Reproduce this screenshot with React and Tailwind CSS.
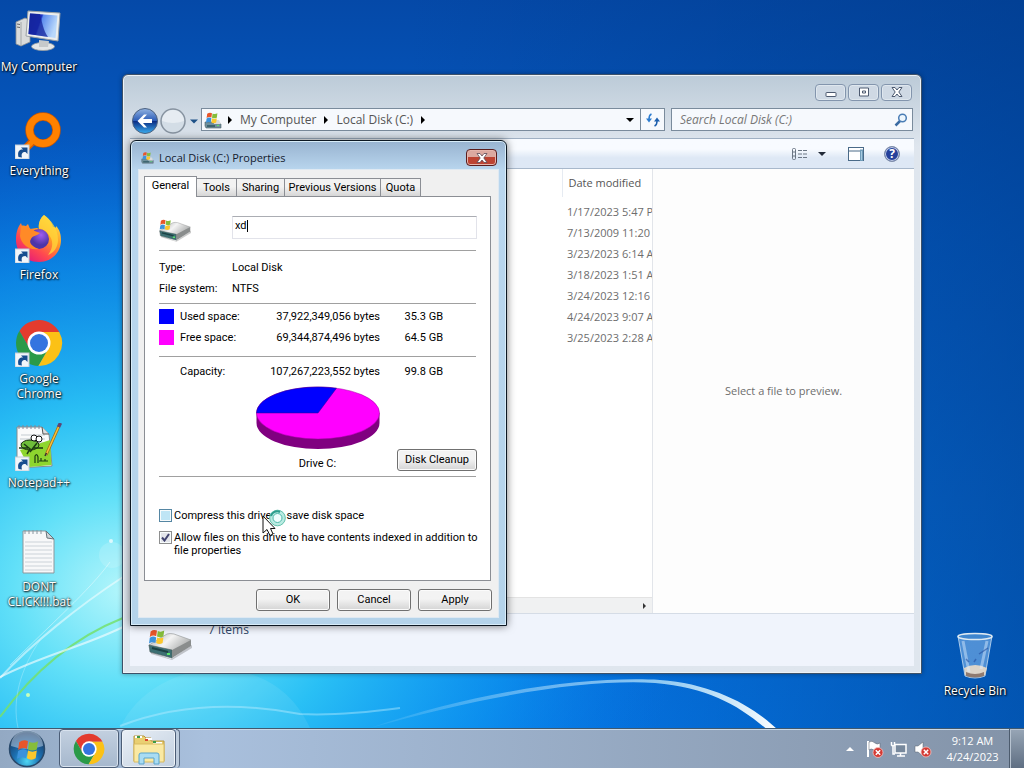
import React, { useState } from 'react';

const uiFont = "font-['Open_Sans','Noto_Sans',sans-serif]";
const dialogFont = "font-['Roboto','Liberation_Sans',sans-serif]";

const files = [
  '1/17/2023 5:47 PM',
  '7/13/2009 11:20 PM',
  '3/23/2023 6:14 AM',
  '3/18/2023 1:51 AM',
  '3/24/2023 12:16 PM',
  '4/24/2023 9:07 AM',
  '3/25/2023 2:28 AM',
];

const Wallpaper = () => (
  <svg className="absolute inset-0 h-full w-full" viewBox="0 0 1024 768" preserveAspectRatio="none" aria-hidden="true">
    <defs>
      <linearGradient id="sky" x1="0" y1="0" x2="0" y2="1">
        <stop offset="0" stopColor="#0549a8" />
        <stop offset="0.3" stopColor="#0560cb" />
        <stop offset="0.65" stopColor="#0874e2" />
        <stop offset="1" stopColor="#0580f5" />
      </linearGradient>
      <linearGradient id="night" x1="0" y1="0" x2="1" y2="0">
        <stop offset="0.4" stopColor="#003a88" stopOpacity="0" />
        <stop offset="0.9" stopColor="#003a88" stopOpacity="0.5" />
        <stop offset="1" stopColor="#003a88" stopOpacity="0.6" />
      </linearGradient>
      <radialGradient id="glow" gradientUnits="userSpaceOnUse" cx="0" cy="0" r="1" gradientTransform="translate(125 590) scale(560 460)">
        <stop offset="0" stopColor="#b4f6fb" />
        <stop offset="0.2" stopColor="#62e0f8" />
        <stop offset="0.4" stopColor="#2bc3f5" stopOpacity="0.95" />
        <stop offset="0.7" stopColor="#109cf0" stopOpacity="0.6" />
        <stop offset="1" stopColor="#0874e2" stopOpacity="0" />
      </radialGradient>
      <linearGradient id="swoosh" x1="0" y1="0" x2="1" y2="0">
        <stop offset="0" stopColor="#fff" stopOpacity="0.05" />
        <stop offset="0.7" stopColor="#c8f0ff" stopOpacity="0.7" />
        <stop offset="1" stopColor="#fff" />
      </linearGradient>
    </defs>
    <rect width="1024" height="768" fill="url(#sky)" />
    <rect width="1024" height="768" fill="url(#night)" />
    <rect width="1024" height="768" fill="url(#glow)" />
    <path d="M370 728C480 690 590 676 660 680C715 684 755 707 780 732L770 732C740 706 710 688 655 683C590 679 490 694 370 728Z" fill="url(#swoosh)" />
    <path d="M120 726Q200 695 300 714Q340 716 400 708" fill="none" stroke="#b5ecff" strokeOpacity="0.45" strokeWidth="2" />
    <path d="M120 728C150 660 270 640 310 728Z" fill="#fff" fillOpacity="0.08" />
    <path d="M0 717C33 672 75 637 123 618" fill="none" stroke="#74e06d" strokeWidth="2" strokeOpacity="0.85" />
    <path d="M0 677C45 654 80 648 123 627" fill="none" stroke="#fff" strokeWidth="2" strokeOpacity="0.6" />
    <path d="M0 678C30 645 80 605 123 577" fill="none" stroke="#fff" strokeWidth="2" strokeOpacity="0.5" />
    <path d="M10 665C50 625 90 590 110 562" fill="none" stroke="#fff" strokeWidth="1" strokeOpacity="0.4" />
    <path d="M18 728C12 700 20 670 40 640" fill="none" stroke="#fff" strokeWidth="1" strokeOpacity="0.25" />
    <circle cx="28" cy="695" r="2" fill="#c8ffb8" />
    <circle cx="111" cy="541" r="2" fill="#fff" fillOpacity="0.7" />
    <circle cx="112" cy="555" r="13" fill="#fff" fillOpacity="0.15" />
  </svg>
);

const ShortcutArrow = () => (
  <g>
    <rect x="0" y="34" width="14" height="14" fill="#f2f6fa" stroke="#c3ccd6" strokeWidth="1" />
    <path d="M3.500 46C2 40 5 38 8 38.500L6 36.500H12.500V43L10.500 41C7 41 6 43 7 46.500Z" fill="#174d8f" />
  </g>
);

const FlagShapes = () => (
  <g>
    <path d="M2 3Q6 0 10 2L9 9Q5 7 1 10Z" fill="#e8562a" />
    <path d="M11 2.500Q15 4.500 19 2L18 9.500Q14 11.500 10 9.500Z" fill="#86bd3a" />
    <path d="M1 11Q5 8 9 10.500L8 17.500Q4 15.500 0 18Z" fill="#3c92dc" />
    <path d="M10 10.500Q14 12.500 18 10.500L17 17.500Q13 20 9 17.500Z" fill="#fcc72c" />
  </g>
);

const MyComputerIcon = () => (
  <svg className="h-12 w-12" viewBox="0 0 48 48" aria-hidden="true">
    <defs>
      <linearGradient id="screen" x1="0" y1="0" x2="1" y2="0.300">
        <stop offset="0" stopColor="#1428a0" />
        <stop offset="0.450" stopColor="#1c33c4" />
        <stop offset="0.500" stopColor="#5b8bee" />
        <stop offset="1" stopColor="#b9d8fb" />
      </linearGradient>
    </defs>
    <path d="M1 15L10 11L15 13V35L6 39L1 37Z" fill="#d9dbdb" stroke="#8d9192" strokeWidth="0.800" />
    <path d="M6 15V39" stroke="#a4a8a9" />
    <path d="M2 17L5 17.500M2 20L5 20.500" stroke="#666" />
    <ellipse cx="28" cy="39.500" rx="11.500" ry="4" fill="#e4e6e6" stroke="#9b9e9f" strokeWidth="0.800" />
    <path d="M24 33L34 34L33 40H24Z" fill="#c6c9ca" />
    <path d="M13 4L45 6L43 34L11 29Z" fill="#eceeee" stroke="#9ba1a5" />
    <path d="M15 6.500L42.500 8.500L40.500 31L13.500 27Z" fill="url(#screen)" />
    <path d="M15 6.500L25 7C27 14 28 23 33 30L13.500 27Z" fill="#14239b" fillOpacity="0.750" />
  </svg>
);

const EverythingIcon = () => (
  <svg className="h-12 w-12" viewBox="0 0 48 48" aria-hidden="true">
    <path d="M18 30L11 37" stroke="#d95c02" strokeWidth="8" />
    <circle cx="28" cy="19" r="13.500" fill="none" stroke="#c95600" strokeWidth="8.500" />
    <circle cx="28" cy="19" r="13.500" fill="none" stroke="#ff8100" strokeWidth="7" />
    <path d="M18 30L12 36" stroke="#ff8100" strokeWidth="5" />
    <ShortcutArrow />
  </svg>
);

const FirefoxIcon = () => (
  <svg className="h-12 w-12" viewBox="0 0 48 48" aria-hidden="true">
    <defs>
      <linearGradient id="fox" x1="0.900" y1="0" x2="0.200" y2="1">
        <stop offset="0" stopColor="#fff14f" />
        <stop offset="0.400" stopColor="#ff9b26" />
        <stop offset="0.700" stopColor="#ff4850" />
        <stop offset="1" stopColor="#e1157f" />
      </linearGradient>
      <radialGradient id="globe" cx="0.600" cy="0.300">
        <stop offset="0" stopColor="#a05df0" />
        <stop offset="1" stopColor="#4c35a8" />
      </radialGradient>
    </defs>
    <path d="M29 0C36 5 37 9 38 12C40 12 41 14 41 11C45 15 46 20 46 25C46 38 36 47 24 47C10 47 1 37 1 25C1 19 2 13 6 8L8 14L13 9L15 14C18 14 22 12 24 14C23 9 25 3 29 0Z" fill="url(#fox)" />
    <path d="M29 0C36 6 43 12 43 25C43 32 39 38 33 40C39 32 38 25 34 20C31 15 25 13 24 14C23 9 25 3 29 0Z" fill="#ffd83b" fillOpacity="0.750" />
    <circle cx="24" cy="24" r="10" fill="url(#globe)" />
    <path d="M6 11C12 9 14 15 25 18C22 21 18 20 16 24C13 28 18 32 24 34C14 36 6 29 5 21Z" fill="#ff8a27" />
    <ShortcutArrow />
  </svg>
);

const ChromeShapes = () => (
  <g>
    <path d="M44.200 13A23 23 0 0 0 4.400 12L14.500 29.500L24 13Z" fill="#e33b2e" />
    <path d="M4.400 12A23 23 0 0 0 23.400 47L33.500 29.500H14.500Z" fill="#2a9a48" />
    <path d="M23.400 47A23 23 0 0 0 44.200 13H24L33.500 29.500Z" fill="#fbc116" />
    <circle cx="24" cy="24" r="11.500" fill="#fff" />
    <circle cx="24" cy="24" r="9" fill="#3474e0" />
  </g>
);

const ChromeShortcutIcon = () => (
  <svg className="h-12 w-12" viewBox="0 0 48 48" aria-hidden="true">
    <ChromeShapes />
    <ShortcutArrow />
  </svg>
);

const NotepadIcon = () => (
  <svg className="h-12 w-12" viewBox="0 0 48 48" aria-hidden="true">
    <path d="M2 4H27L34 11L37 43L2 45Z" fill="#fafafa" stroke="#858b8d" />
    <path d="M6 12H30M5 16H30M5 20H33" stroke="#c4cbd0" />
    <path d="M5 27L35 17L36.500 42L14 44Z" fill="#8ed62e" />
    <path d="M4 2V6M8 2V6M12 2V6M16 2V6M20 2V6M24 2V6" stroke="#889" />
    <ellipse cx="15" cy="22" rx="9" ry="5" fill="#6fbe3a" stroke="#162b0c" />
    <path d="M4 25H13M18 25H28M9 21L15 26L12 31M22 20L15 29" stroke="#1d3c12" fill="none" strokeWidth="1.500" />
    <circle cx="19" cy="15" r="3" fill="#fff" stroke="#111" />
    <circle cx="24" cy="16" r="3" fill="#fff" stroke="#111" />
    <path d="M20 40V33Q22 30 23 34V40M26 38V35M30 38V36M24 38H33" stroke="#1d3c12" fill="none" strokeWidth="1.200" />
    <path d="M27 4L28 11L34 11" fill="#ddd" stroke="#555" />
    <path d="M44 3L31 32" stroke="#a36b12" strokeWidth="3" />
    <path d="M44 3L31 32" stroke="#f5c23b" strokeWidth="1.500" />
    <path d="M45.500 0L43.500 4" stroke="#5c4676" strokeWidth="3.500" />
    <path d="M30 33L31.500 30" stroke="#333" strokeWidth="1.500" />
    <ShortcutArrow />
  </svg>
);

const BatIcon = () => (
  <svg className="h-12 w-12" viewBox="0 0 48 48" aria-hidden="true">
    <path d="M8 4H31L39 12V46H8Z" fill="#f7f8f9" stroke="#8b979c" />
    <path d="M10 15H37M10 19H37M10 23H37M10 27H37M10 31H37M10 35H37M10 39H37M10 43H37" stroke="#cbd2d8" />
    <path d="M31 4L32 11L39 12Z" fill="#cfd6da" stroke="#67747b" />
    <path d="M10 3V7M14 3V7M18 3V7M22 3V7M26 3V7" stroke="#8996a0" />
  </svg>
);

const RecycleBinIcon = () => (
  <svg className="h-12 w-12" viewBox="0 0 48 48" aria-hidden="true">
    <path d="M7 5L14 45Q24 49 34 45L41 5Z" fill="#9ac8f5" fillOpacity="0.500" stroke="#c8def2" strokeOpacity="0.800" />
    <path d="M13 37Q24 31 36 37L34 44Q24 48 14 44Z" fill="#dcd4c9" />
    <path d="M15 41Q24 45 33 41L33 45Q24 48 15 45Z" fill="#8f7a70" />
    <path d="M12 10L18 41M36 10L30 38" stroke="#dff0ff" strokeOpacity="0.450" strokeWidth="3" />
    <path d="M28 23L37 17M18 31L15 28M23 31L25 28" stroke="#254d9e" strokeOpacity="0.600" strokeWidth="1.500" />
    <ellipse cx="24" cy="5.500" rx="17" ry="3" fill="#3f86cf" stroke="#dfeaf2" strokeWidth="1.500" />
  </svg>
);

const DriveIcon = ({ className }) => (
  <svg className={className} viewBox="0 0 44 32" aria-hidden="true">
    <defs>
      <linearGradient id="drive" x1="0" y1="0" x2="1" y2="0.500">
        <stop offset="0" stopColor="#a0a3a3" />
        <stop offset="0.500" stopColor="#f4f4f4" />
        <stop offset="1" stopColor="#a9abab" />
      </linearGradient>
    </defs>
    <path d="M3 24L23 31L44 17V20L24 32L3 26Z" fill="#000" fillOpacity="0.200" />
    <path d="M1 17L19 6Q22 5 26 6L43 12L24 25L2 20Z" fill="url(#drive)" stroke="#8f9292" strokeWidth="0.600" />
    <path d="M1 17L24 22V30L2 24Z" fill="#3c6f72" stroke="#4c5a5a" strokeWidth="0.600" />
    <path d="M24 22L43 12V18L24 30Z" fill="#8a8d8d" />
    <path d="M4 20L20 24" stroke="#1c4144" strokeWidth="2" />
    <rect x="19" y="25" width="3" height="2" fill="#59e36a" />
    <g transform="translate(1 1) scale(0.800)"><FlagShapes /></g>
  </svg>
);

/* Compact version for the 16px slots, where the flag takes up most of the icon */
const SmallDriveIcon = ({ className }) => (
  <svg className={className} viewBox="0 0 18 18" aria-hidden="true">
    <path d="M1 11H14L17 13V17H2L1 15Z" fill="#6f8f9b" stroke="#4f6068" strokeWidth="0.600" />
    <path d="M10 9L15 9L17 13H10Z" fill="#d9dcdc" />
    <path d="M3 15H11" stroke="#2b5560" strokeWidth="1.500" />
    <rect x="13" y="14" width="2" height="1" fill="#59e36a" />
    <g transform="translate(2 1) scale(0.600)"><FlagShapes /></g>
  </svg>
);

const BackIcon = () => (
  <svg className="h-7 w-7" viewBox="0 0 28 28" aria-hidden="true">
    <defs>
      <linearGradient id="back" x1="0" y1="0" x2="0" y2="1">
        <stop offset="0" stopColor="#93b4e2" />
        <stop offset="0.480" stopColor="#2c5db8" />
        <stop offset="0.520" stopColor="#0b2f86" />
        <stop offset="1" stopColor="#3cb0f2" />
      </linearGradient>
    </defs>
    <circle cx="14" cy="14" r="12.500" fill="url(#back)" stroke="#4c617f" />
    <path d="M6.500 14L13 7.500H16L12 12H21V16H12L16 20.500H13Z" fill="#fff" />
  </svg>
);

const ForwardIcon = () => (
  <svg className="h-7 w-7" viewBox="0 0 28 28" aria-hidden="true">
    <circle cx="14" cy="14" r="12" fill="#d3dde6" stroke="#8793a0" strokeWidth="1.500" />
    <path d="M3 14A11 11 0 0 1 25 14Q14 18 3 14Z" fill="#eef2f6" fillOpacity="0.700" />
  </svg>
);

const Triangle = ({ className, d = 'M0 0L4 4L0 8Z', box = '0 0 4 8' }) => (
  <svg className={className} viewBox={box} fill="currentColor" aria-hidden="true"><path d={d} /></svg>
);

const DownTriangle = ({ className }) => <Triangle className={className} d="M0 0H8L4 4Z" box="0 0 8 4" />;

const BusyCursor = () => (
  <svg className="pointer-events-none absolute left-[262px] top-[508px] h-8 w-7" viewBox="0 0 28 32" aria-hidden="true">
    <circle cx="15.500" cy="10" r="6" fill="none" stroke="#b9ebe2" strokeWidth="4" />
    <circle cx="15.500" cy="10" r="7.800" fill="none" stroke="#68c3ae" />
    <circle cx="15.500" cy="10" r="4.500" fill="#eefcfc" stroke="#50b9aa" />
    <path d="M9 8A6.500 6.500 0 0 1 18 4" fill="none" stroke="#2b9c8c" strokeWidth="2" />
    <path d="M1 8V25L5 21.500L8 27.500L11 26L8.500 20.500H13Z" fill="#fff" stroke="#111" />
  </svg>
);

const DesktopItem = ({ icon, label }) => (
  <button className="flex h-[67px] w-[78px] flex-col items-center gap-1 text-center text-xs leading-[15px] text-white [text-shadow:1px_1px_2px_#000,0_0_2px_#000]">
    <span className="block shrink-0">{icon}</span>
    <span className="whitespace-pre">{label}</span>
  </button>
);

const CaptionButton = ({ label, children }) => (
  <button aria-label={label} className="flex h-[17px] w-[31px] items-center justify-center rounded-sm border border-[#8395ad] bg-[#cfd9e4] shadow-[inset_0_0_0_1px_#dfe7ee]">
    <svg className="h-3 w-4" viewBox="0 0 16 12" fill="#fff" stroke="#4d5a70" aria-hidden="true">{children}</svg>
  </button>
);

const ExplorerWindow = () => (
  <section aria-label="Local Disk (C:)" className="absolute bottom-[54px] left-[122px] right-[102px] top-[74px] flex flex-col rounded-t-md border border-[#3d5168] bg-[#d9e3ec] bg-gradient-to-b from-[#bccbd8] to-[#dfe6ee] to-12% px-[7px] pb-[7px] text-[#555] shadow-[inset_0_0_0_1px_#edf2f6,0_0_5px_#0005]">
    <div className="flex h-[32px] shrink-0 items-center justify-end gap-0.5 pr-0.5 pt-0.5">
      <CaptionButton label="Minimize"><rect x="3" y="6.500" width="10" height="4" rx="0.500" /></CaptionButton>
      <CaptionButton label="Maximize"><path d="M3.500 2H12.500V10H3.500Z" /><path d="M6.500 5H9.500V7H6.500Z" /></CaptionButton>
      <CaptionButton label="Close"><path d="M3 1.500H6L8 4L10 1.500H13L9.800 6L13 10.500H10L8 8L6 10.500H3L6.200 6Z" /></CaptionButton>
    </div>
    <div className="flex h-[31px] shrink-0 items-start pl-px">
      <button aria-label="Back"><BackIcon /></button>
      <button aria-label="Forward"><ForwardIcon /></button>
      <button aria-label="Recent pages" className="flex h-6 w-3.5 items-center justify-center pt-1"><DownTriangle className="h-[5px] w-2 text-[#1d5187]" /></button>
      <div className="mt-px flex h-[23px] flex-1 items-center border border-[#7a8b9c] bg-[#f6f9fd] text-xs">
        <SmallDriveIcon className="ml-0.5 h-[18px] w-[18px]" />
        <Triangle className="ml-1.5 h-2 w-1 text-black" />
        <button className="ml-2">My Computer</button>
        <Triangle className="ml-2 h-2 w-1 text-black" />
        <button className="ml-2">Local Disk (C:)</button>
        <Triangle className="ml-2 h-2 w-1 text-black" />
        <button aria-label="Previous locations" className="ml-auto px-1.5"><DownTriangle className="h-1 w-2 text-black" /></button>
        <button aria-label="Refresh" className="flex h-full w-6 items-center justify-center border-l border-[#7a8b9c]">
          <svg className="h-4 w-4" viewBox="0 0 16 16" fill="none" aria-hidden="true">
            <path d="M6.500 2Q4 3 4 7" stroke="#2c7cd0" strokeWidth="1.500" />
            <path d="M1 6.500H7L4 10.500Z" fill="#2c7cd0" />
            <path d="M9.500 14Q12 13 12 9" stroke="#1d5fae" strokeWidth="1.500" />
            <path d="M9 9.500H15L12 5.500Z" fill="#1d5fae" />
          </svg>
        </button>
      </div>
      <label className="ml-1.5 mr-px mt-px flex h-[23px] w-[242px] items-center border border-[#7a8b9c] bg-[#f6f9fd] pl-2 pr-1">
        <input aria-label="Search Local Disk (C:)" placeholder="Search Local Disk (C:)" className="min-w-0 flex-1 bg-transparent text-xs italic outline-none placeholder:text-[#777]" />
        <svg className="h-3.5 w-3.5" viewBox="0 0 14 14" fill="none" aria-hidden="true">
          <path d="M6 8L1.500 12.500" stroke="#3a6ba2" strokeWidth="2.500" />
          <circle cx="8.500" cy="5" r="3.800" fill="#edf6fd" stroke="#4a7db5" strokeWidth="1.500" />
        </svg>
      </label>
    </div>
    <div className="flex h-[31px] shrink-0 items-center justify-end border-b border-t border-b-[#a8b8cb] border-t-[#9fb0c3] bg-gradient-to-b from-[#f8fbff] from-35% to-[#dee8f5] to-65% pr-3.5">
      <button aria-label="Change your view">
        <svg className="h-4 w-4" viewBox="0 0 16 16" stroke="#6b7684" fill="none" aria-hidden="true">
          <rect x="0.500" y="2.500" width="3" height="11" rx="1" />
          <path d="M1 6H4M1 10H4M6 4.500H10M6 8H10M6 11.500H10M11 4.500H15M11 8H15M11 11.500H15" />
        </svg>
      </button>
      <button aria-label="More options" className="px-2.5"><DownTriangle className="h-1 w-2 text-[#222b38]" /></button>
      <button aria-label="Preview pane" className="ml-3">
        <svg className="h-4 w-4" viewBox="0 0 16 16" fill="#fff" stroke="#4a6a88" aria-hidden="true">
          <rect x="0.500" y="1.500" width="15" height="13" />
          <path d="M1 5H12" />
          <rect x="12.500" y="4" width="2" height="10.500" fill="#a7c9df" stroke="#6f9cb9" />
        </svg>
      </button>
      <button aria-label="Help" className="ml-5 flex h-4 w-4 items-center justify-center rounded-full border border-[#8290aa] bg-[#25409b] text-xs font-bold leading-3 text-white shadow-[inset_0_0_0_1px_#c6d1e8]">?</button>
    </div>
    <div className="flex min-h-0 flex-1 bg-white">
      <div className="flex w-[523px] flex-col border-r border-[#e2e5ea]">
        <table className="w-full table-fixed border-collapse text-left text-[11px]">
          <thead>
            <tr className="h-[28px]">
              <th aria-label="Name" className="w-[432px] border-r border-[#e6ebf2]" />
              <th className="whitespace-nowrap pl-1.5 font-normal">Date modified</th>
            </tr>
          </thead>
          <tbody className="text-[#6d6d6d]">
            <tr className="h-[5px]"><td colSpan={2} /></tr>
            {files.map((modified) => (
              <tr key={modified} className="h-[21px]">
                <td />
                <td className="overflow-hidden whitespace-nowrap pl-[5px]">{modified}</td>
              </tr>
            ))}
          </tbody>
        </table>
        <div className="mt-auto flex h-4 items-center justify-end border-t border-[#e3e3e3] bg-[#f0f1f2] pr-1.5">
          <Triangle className="h-1.5 w-[3px] text-[#333]" />
        </div>
      </div>
      <div className="flex flex-1 items-center justify-center bg-[#fdfdfd] text-[11px] text-[#6d6d6d]">Select a file to preview.</div>
    </div>
    <div className="flex h-[53px] shrink-0 gap-4 border-t border-[#d5dce6] bg-[#f0f4fc] pl-[18px] pt-2 text-xs text-[#2e4668]">
      <DriveIcon className="mt-1.5 h-8 w-11" />
      <span className="leading-4">7 items</span>
    </div>
  </section>
);

const DialogButton = ({ children, className = 'w-[74px]' }) => (
  <button className={`h-[22px] rounded-[3px] border border-[#707070] bg-gradient-to-b from-[#f3f3f3] from-45% to-[#d4d4d4] shadow-[inset_0_0_0_1px_#fbfbfb] ${className}`}>
    {children}
  </button>
);

const Tick = () => (
  <svg className="pointer-events-none absolute left-0.5 top-0.5 h-[9px] w-[9px]" viewBox="0 0 9 9" aria-hidden="true">
    <path d="M1 4.500L3.500 7.500L8 1" fill="none" stroke="#40436f" strokeWidth="2" />
  </svg>
);

const CheckOption = ({ children, checked, onChange, tone }) => (
  <label className="flex items-start gap-0.5 leading-[13px]">
    <span className="relative block h-[13px] w-[13px] shrink-0">
      <input type="checkbox" checked={checked} onChange={onChange} className={`block h-[13px] w-[13px] appearance-none border shadow-[inset_0_0_0_1px_#f7fbfc] ${tone}`} />
      {checked && <Tick />}
    </span>
    <span className="whitespace-nowrap">{children}</span>
  </label>
);

const SpaceRow = ({ color, label, bytes, size }) => (
  <div className="flex h-[21px] items-center">
    <span className={`h-[15px] w-[15px] ${color}`} />
    <span className="ml-1.5 w-[80px]">{label}</span>
    <span className="w-[120px] text-right">{bytes}</span>
    <span className="w-[63px] text-right">{size}</span>
  </div>
);

const UsagePie = () => (
  <svg className="h-16 w-[124px]" viewBox="0 0 124 64" role="img" aria-label="Disk usage">
    <path d="M0.500 27V37A61.500 26 0 0 0 123.500 37V27Z" fill="#800080" />
    <ellipse cx="62" cy="27" rx="61.500" ry="26" fill="#ff00ff" stroke="#a000a0" strokeWidth="0.500" />
    <path d="M62 27H0.500A61.500 26 0 0 1 80.500 2.200Z" fill="#0000ff" stroke="#30008c" strokeWidth="0.500" />
  </svg>
);

const tabs = [
  ['Tools', 'w-[41px]'],
  ['Sharing', 'w-[49px]'],
  ['Previous Versions', 'w-[97px]'],
  ['Quota', 'w-[41px]'],
];

const PropertiesDialog = () => {
  const [label, setLabel] = useState('xd');
  const [compress, setCompress] = useState(false);
  const [indexed, setIndexed] = useState(true);

  return (
    <section role="dialog" aria-label="Local Disk (C:) Properties" className="absolute left-[130px] top-[140px] w-[377px] rounded-t-md border border-[#0c1722] bg-gradient-to-b from-[#98b3d0] via-[#b9d6ee] via-6% to-[#b4d3ea] px-[7px] pb-[7px] shadow-[inset_0_0_0_1px_#d8ecf8,0_0_8px_#0008]">
      <div className="flex h-[28px] items-start">
        <SmallDriveIcon className="ml-0.5 mt-2.5 h-[13px] w-[15px]" />
        <h2 className="ml-1 mt-2 text-[11px] leading-[18px] text-[#14202e]">Local Disk (C:) Properties</h2>
        <button aria-label="Close" className="ml-auto mr-0.5 mt-2 flex h-[17px] w-[31px] items-center justify-center rounded-sm border border-[#5b1d1d] bg-gradient-to-b from-[#dca9a0] from-45% to-[#bd4332] to-50% shadow-[inset_0_0_0_1px_#e5b5ac]">
          <svg className="h-2.5 w-3" viewBox="0 0 12 10" fill="#fff" stroke="#5c4a56" strokeWidth="0.800" aria-hidden="true">
            <path d="M1 0.500H4L6 3L8 0.500H11L7.800 5L11 9.500H8L6 7L4 9.500H1L4.200 5Z" />
          </svg>
        </button>
      </div>
      <div className={`border border-[#dfe9f2] bg-[#f0f0f0] py-1.5 pl-[5px] pr-[7px] text-[11px] leading-4 text-black ${dialogFont}`}>
        <div role="tablist" className="flex items-end">
          <button role="tab" aria-selected="true" className="relative z-10 -mb-px h-[21px] w-[53px] border border-b-0 border-[#8b8e94] bg-white pb-0.5">General</button>
          {tabs.map(([name, width]) => (
            <button key={name} role="tab" aria-selected="false" className={`-ml-px h-[18px] whitespace-nowrap border border-b-0 border-[#8b8e94] bg-gradient-to-b from-[#f2f2f2] from-45% to-[#d6d6d6] ${width}`}>{name}</button>
          ))}
        </div>
        <div role="tabpanel" className="border border-[#8b8e94] bg-white px-3.5 pb-[23px] pt-[19px]">
          <div className="flex h-[34px]">
            <DriveIcon className="mt-0.5 h-6 w-8" />
            <div className="relative -mr-px ml-[41px] flex-1">
              <input aria-label="Drive label" value={label} onChange={(e) => setLabel(e.target.value)} className="h-[23px] w-full border border-[#e2e3ea] border-t-[#abadb3] pb-1 pl-0.5 outline-none" />
              <span className="absolute left-[15px] top-1 h-3 w-px bg-black" />
            </div>
          </div>
          <dl className="grid grid-cols-[73px_1fr] border-y border-[#a0a0a0] pb-1 pt-1.5 leading-[21px]">
            <dt>Type:</dt><dd>Local Disk</dd>
            <dt>File system:</dt><dd>NTFS</dd>
          </dl>
          <div className="border-b border-[#a0a0a0] pb-2 pt-0.5">
            <SpaceRow color="bg-[#0000ff]" label="Used space:" bytes="37,922,349,056 bytes" size="35.3 GB" />
            <SpaceRow color="bg-[#ff00ff]" label="Free space:" bytes="69,344,874,496 bytes" size="64.5 GB" />
          </div>
          <div className="border-b border-[#a0a0a0] pb-1 pt-1">
            <SpaceRow color="bg-white" label="Capacity:" bytes="107,267,223,552 bytes" size="99.8 GB" />
            <div className="grid grid-cols-[1fr_128px_1fr] items-end">
              <div className="col-start-2 mt-1 flex flex-col items-center">
                <UsagePie />
                <span className="mt-1.5">Drive C:</span>
              </div>
              <DialogButton className="-mr-px mb-px w-[80px] justify-self-end whitespace-nowrap">Disk Cleanup</DialogButton>
            </div>
          </div>
          <div className="flex flex-col gap-[9px] pt-8">
            <CheckOption checked={compress} onChange={() => setCompress(!compress)} tone="border-[#5586a3] bg-[#bfe5f5]">Compress this drive to save disk space</CheckOption>
            <CheckOption checked={indexed} onChange={() => setIndexed(!indexed)} tone="border-[#8e8f8f] bg-[#e3e5ea]">
              Allow files on this drive to have contents indexed in addition to<br />file properties
            </CheckOption>
          </div>
        </div>
        <div className="-mr-px mt-2 flex justify-end gap-[7px]">
          <DialogButton>OK</DialogButton>
          <DialogButton>Cancel</DialogButton>
          <DialogButton>Apply</DialogButton>
        </div>
      </div>
    </section>
  );
};

const Taskbar = () => (
  <footer className="relative flex h-10 items-stretch border-t border-[#40596f] bg-[#a7bfdc] bg-gradient-to-r from-[#93a9c3] via-[#a9c0dd] via-20% to-[#8393a8] text-white shadow-[inset_0_1px_0_#c9d9e8]">
    <button aria-label="Start" className="ml-2 flex w-[38px] items-center justify-center">
      <svg className="h-[38px] w-[38px]" viewBox="0 0 38 38" aria-hidden="true">
        <defs>
          <radialGradient id="orb" cx="0.500" cy="0.850" r="0.800">
            <stop offset="0" stopColor="#4fd6f3" />
            <stop offset="0.450" stopColor="#1c72b4" />
            <stop offset="1" stopColor="#17365f" />
          </radialGradient>
        </defs>
        <circle cx="19" cy="19" r="17.500" fill="url(#orb)" stroke="#28496b" strokeWidth="1.500" />
        <path d="M3 16A16 16 0 0 1 35 16Q19 22 3 16Z" fill="#dcecfa" fillOpacity="0.450" />
        <g transform="translate(9 9) scale(1.100)"><FlagShapes /></g>
      </svg>
    </button>
    <button aria-label="Google Chrome" className="ml-[13px] flex w-[60px] items-center justify-center rounded-sm border border-[#4b5d76] bg-gradient-to-b from-[#c3d0e0] to-[#a6b8cd] shadow-[inset_0_0_0_1px_#d8e2ee]">
      <svg className="h-8 w-8" viewBox="0 0 48 48" aria-hidden="true"><ChromeShapes /></svg>
    </button>
    <button aria-label="Windows Explorer" className="ml-0.5 flex w-[55px] items-center justify-center rounded-sm border border-[#4b5d76] bg-gradient-to-br from-[#e9eff6] to-[#c2d0e0] shadow-[inset_0_0_0_1px_#eef3f8]">
      <svg className="h-8 w-8" viewBox="0 0 32 32" aria-hidden="true">
        <path d="M1 6V3H11L13 5H18V8H31V28H1Z" fill="#e9cf72" stroke="#b9973c" />
        <path d="M2 4H9M13 6H19M20 10H29" stroke="#fff" strokeWidth="2" />
        <path d="M4 4H7M20 9H23" stroke="#3d9a47" strokeWidth="2" />
        <path d="M12 7H15" stroke="#d8452e" strokeWidth="2" />
        <path d="M1 11H31V29H1Z" fill="#fae9a3" stroke="#d9bb60" />
        <path d="M6 31V22Q6 20 8 20H24Q26 20 26 22V31H21V25H11V31Z" fill="#a9dcf3" stroke="#5aa5cd" />
      </svg>
    </button>
    <span className="w-1 rounded-r-sm border-r border-t border-[#5b6d86] bg-[#bccbdc]" />
    <div className="ml-auto flex items-center">
      <button aria-label="Show hidden icons" className="px-1"><Triangle className="h-1 w-2" d="M0 4H8L4 0Z" box="0 0 8 4" /></button>
      <svg className="ml-2 h-[18px] w-[18px]" viewBox="0 0 18 18" aria-label="Action center">
        <path d="M2 1V17" stroke="#fff" strokeWidth="2" />
        <path d="M3 2Q6 0 9 3Q11 5 14 3V11Q10 12 8 10Q5 8 3 10Z" fill="#fff" stroke="#555e6b" strokeWidth="0.500" />
        <circle cx="12" cy="12.500" r="5" fill="#d43a34" stroke="#f2c3c0" strokeWidth="0.800" />
        <path d="M9.800 10.300L14.200 14.700M14.200 10.300L9.800 14.700" stroke="#fff" strokeWidth="1.500" />
      </svg>
      <svg className="ml-1.5 h-[18px] w-[18px]" viewBox="0 0 18 18" fill="none" aria-label="Network">
        <rect x="5" y="4.500" width="11" height="8.500" fill="#77889c" stroke="#fff" strokeWidth="1.500" />
        <path d="M10.500 13V16M7 16H15" stroke="#fff" strokeWidth="1.500" />
        <path d="M1.500 2V5Q3 7 4.500 5V2M3 6V14H5" stroke="#fff" strokeWidth="1.500" />
      </svg>
      <svg className="ml-1.5 h-[18px] w-[18px]" viewBox="0 0 18 18" aria-label="Volume">
        <path d="M1 6H4L9 2V16L4 12H1Z" fill="#fff" stroke="#59636f" strokeWidth="0.500" />
        <circle cx="12" cy="12" r="5" fill="#d43a34" stroke="#f2c3c0" strokeWidth="0.800" />
        <path d="M9.800 9.800L14.200 14.200M14.200 9.800L9.800 14.200" stroke="#fff" strokeWidth="1.500" />
      </svg>
      <time className="w-[77px] pl-1 text-center text-[11px] leading-4">9:12 AM<br />4/24/2023</time>
      <button aria-label="Show desktop" className="h-full w-[15px] border-l border-[#4c5b6d] bg-gradient-to-b from-[#98a6b6] to-[#5f6f83] shadow-[inset_1px_1px_0_#b7c3d0]" />
    </div>
  </footer>
);

export default function App() {
  return (
    <div className={`relative flex min-h-screen flex-col overflow-hidden ${uiFont}`}>
      <Wallpaper />
      <main className="relative flex flex-1 justify-between">
        <div className="flex flex-col gap-[37px] pt-[7px]">
          <DesktopItem icon={<MyComputerIcon />} label="My Computer" />
          <DesktopItem icon={<EverythingIcon />} label="Everything" />
          <DesktopItem icon={<FirefoxIcon />} label="Firefox" />
          <DesktopItem icon={<ChromeShortcutIcon />} label={'Google\nChrome'} />
          <DesktopItem icon={<NotepadIcon />} label="Notepad++" />
          <DesktopItem icon={<BatIcon />} label={'DONT\nCLICK!!!.bat'} />
        </div>
        <div className="flex flex-col justify-end pb-[30px] pr-2.5">
          <DesktopItem icon={<RecycleBinIcon />} label="Recycle Bin" />
        </div>
        <ExplorerWindow />
        <PropertiesDialog />
        <BusyCursor />
      </main>
      <Taskbar />
    </div>
  );
}
